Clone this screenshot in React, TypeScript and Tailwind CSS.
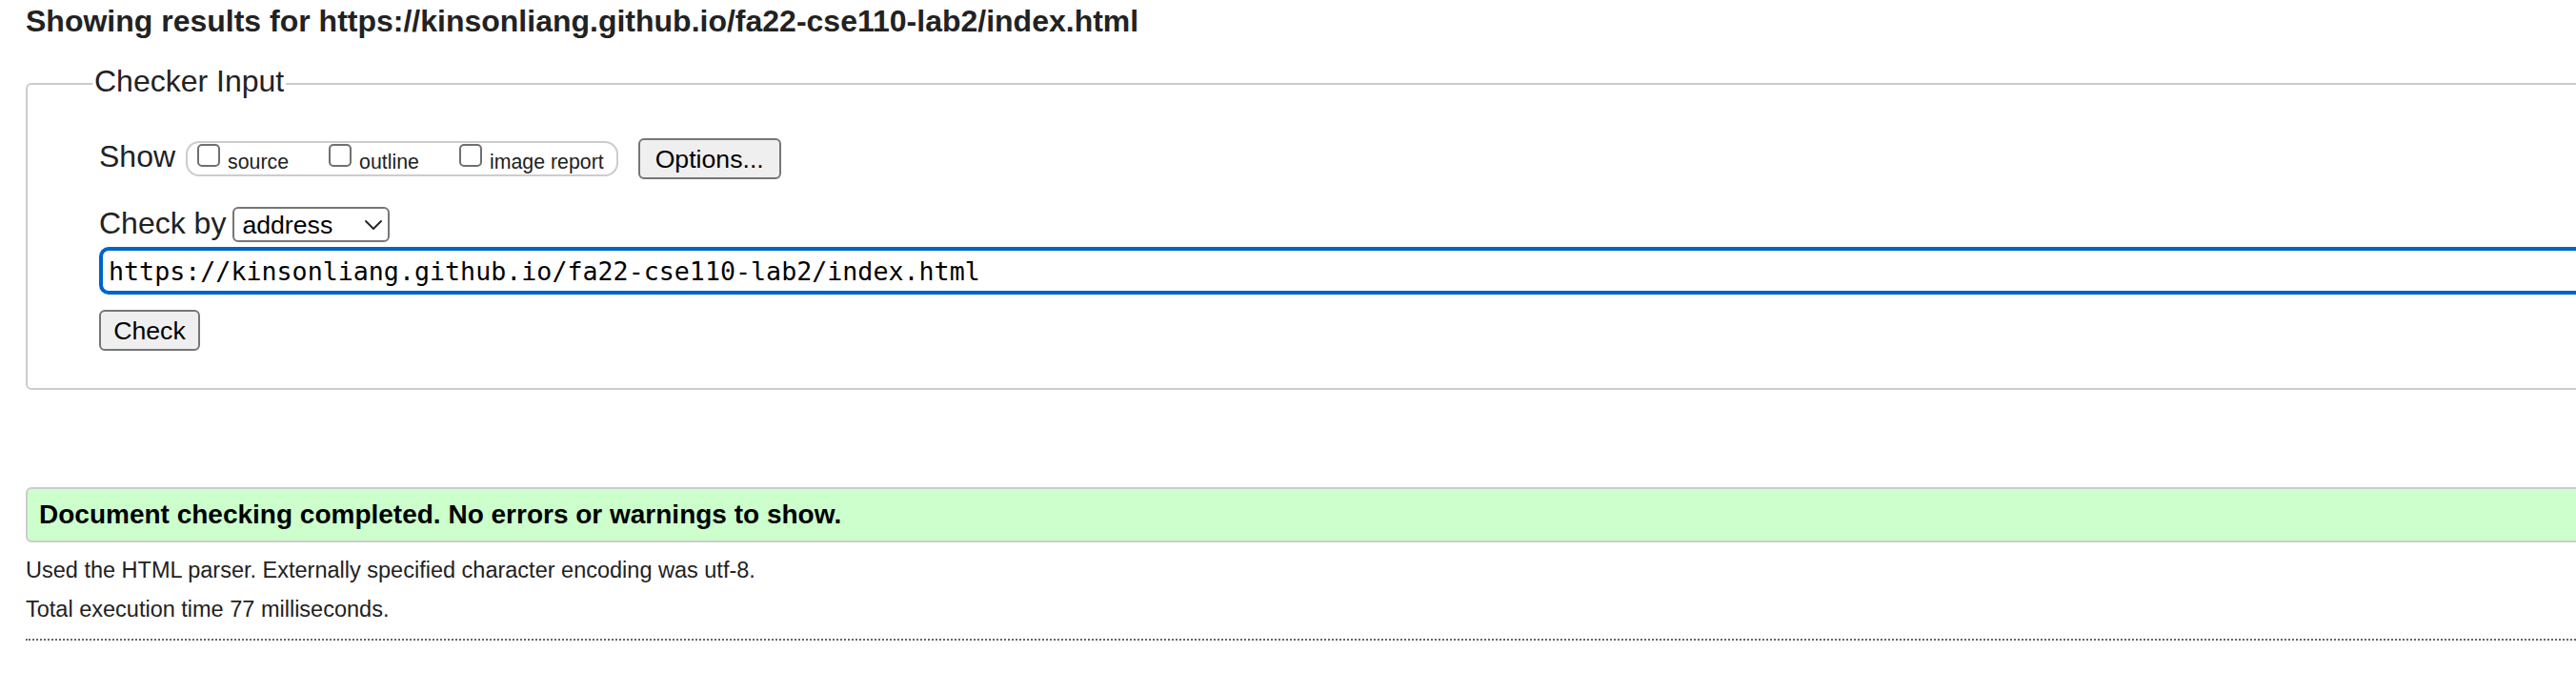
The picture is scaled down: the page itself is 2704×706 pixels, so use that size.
import React from "react";

function Box({ label, gapLeft }: { label: string; gapLeft?: boolean }) {
  return (
    <div className={"flex items-start " + (gapLeft ? "ml-[42px]" : "")}>
      <span className="mt-[1px] block h-[24px] w-[24px] rounded-[5px] border-2 border-[#707070] bg-white" />
      <span className="ml-[8px] mt-[8px] text-[21.33px] leading-[24px] text-[#222]">{label}</span>
    </div>
  );
}

export default function App() {
  return (
    <div className="w-[2704px] overflow-hidden bg-white font-['Liberation_Sans',Arial,sans-serif] text-[#222]">
      <div className="w-[2800px] pl-[27px]">
        <h2 className="h-[44px] text-[32px] font-bold leading-[44px] text-[#222]">
          Showing results for https://kinsonliang.github.io/fa22-cse110-lab2/index.html
        </h2>
        <fieldset className="mt-[23px] w-[2760px] rounded-[6px] border-2 border-[#cccccc] pb-[39px] pl-[75px] pt-[37px]">
          <legend className="-ml-[7px] px-[2px] pb-[4px] text-[32px] leading-[37px] text-[#222]">
            Checker Input
          </legend>
          <div className="flex h-[43px] items-center">
            <span className="mb-[5px] text-[32px] leading-[37px]">Show</span>
            <div className="ml-[11px] flex h-[37px] items-start rounded-[14px] border-2 border-[#cccccc] pl-[10px] pr-[13px]">
              <Box label="source" />
              <Box label="outline" gapLeft />
              <Box label="image report" gapLeft />
            </div>
            <button className="ml-[21px] h-[43px] w-[150px] rounded-[6px] border-2 border-[#767676] bg-[#efefef] text-[26.67px] leading-[30px] text-black">
              Options...
            </button>
          </div>
          <div className="mt-[29px] flex h-[37px] items-center">
            <span className="mb-[3px] text-[32px] leading-[37px]">Check by</span>
            <div className="ml-[7px] flex h-[37px] w-[165px] items-center justify-between rounded-[6px] border-2 border-[#767676] bg-white pl-[8px] pr-[6px]">
              <span className="text-[26.67px] leading-[30px] text-black">address</span>
              <svg width="18" height="10" viewBox="0 0 18 10" fill="none">
                <path d="M1 1 L9 9 L17 1" stroke="#222" strokeWidth="1.8" strokeLinecap="round" strokeLinejoin="round" />
              </svg>
            </div>
          </div>
          <input
            readOnly
            value="https://kinsonliang.github.io/fa22-cse110-lab2/index.html"
            className="mt-[5px] block h-[50px] w-[2700px] rounded-[10px] border-4 border-[#0064c8] bg-white pl-[6px] font-['DejaVu_Sans_Mono',monospace] text-[26.67px] text-black outline-none"
          />
          <button className="mt-[16px] block h-[43px] w-[106px] rounded-[6px] border-2 border-[#767676] bg-[#efefef] text-[26.67px] leading-[30px] text-black">
            Check
          </button>
        </fieldset>
        <div className="mt-[102px] flex h-[58px] w-[2760px] items-center rounded-[6px] border-2 border-[#cccccc] bg-[#ccffcc] pl-[12px]">
          <span className="text-[28px] font-bold leading-[32px] text-black">
            Document checking completed. No errors or warnings to show.
          </span>
        </div>
        <p className="mt-[9px] text-[23.5px] leading-[41px] text-[#222]">
          Used the HTML parser. Externally specified character encoding was utf-8.
        </p>
        <p className="text-[23.5px] leading-[41px] text-[#222]">Total execution time 77 milliseconds.</p>
        <div className="mt-[10px] w-[2760px] border-t-2 border-dotted border-[#666666]" />
      </div>
    </div>
  );
}
